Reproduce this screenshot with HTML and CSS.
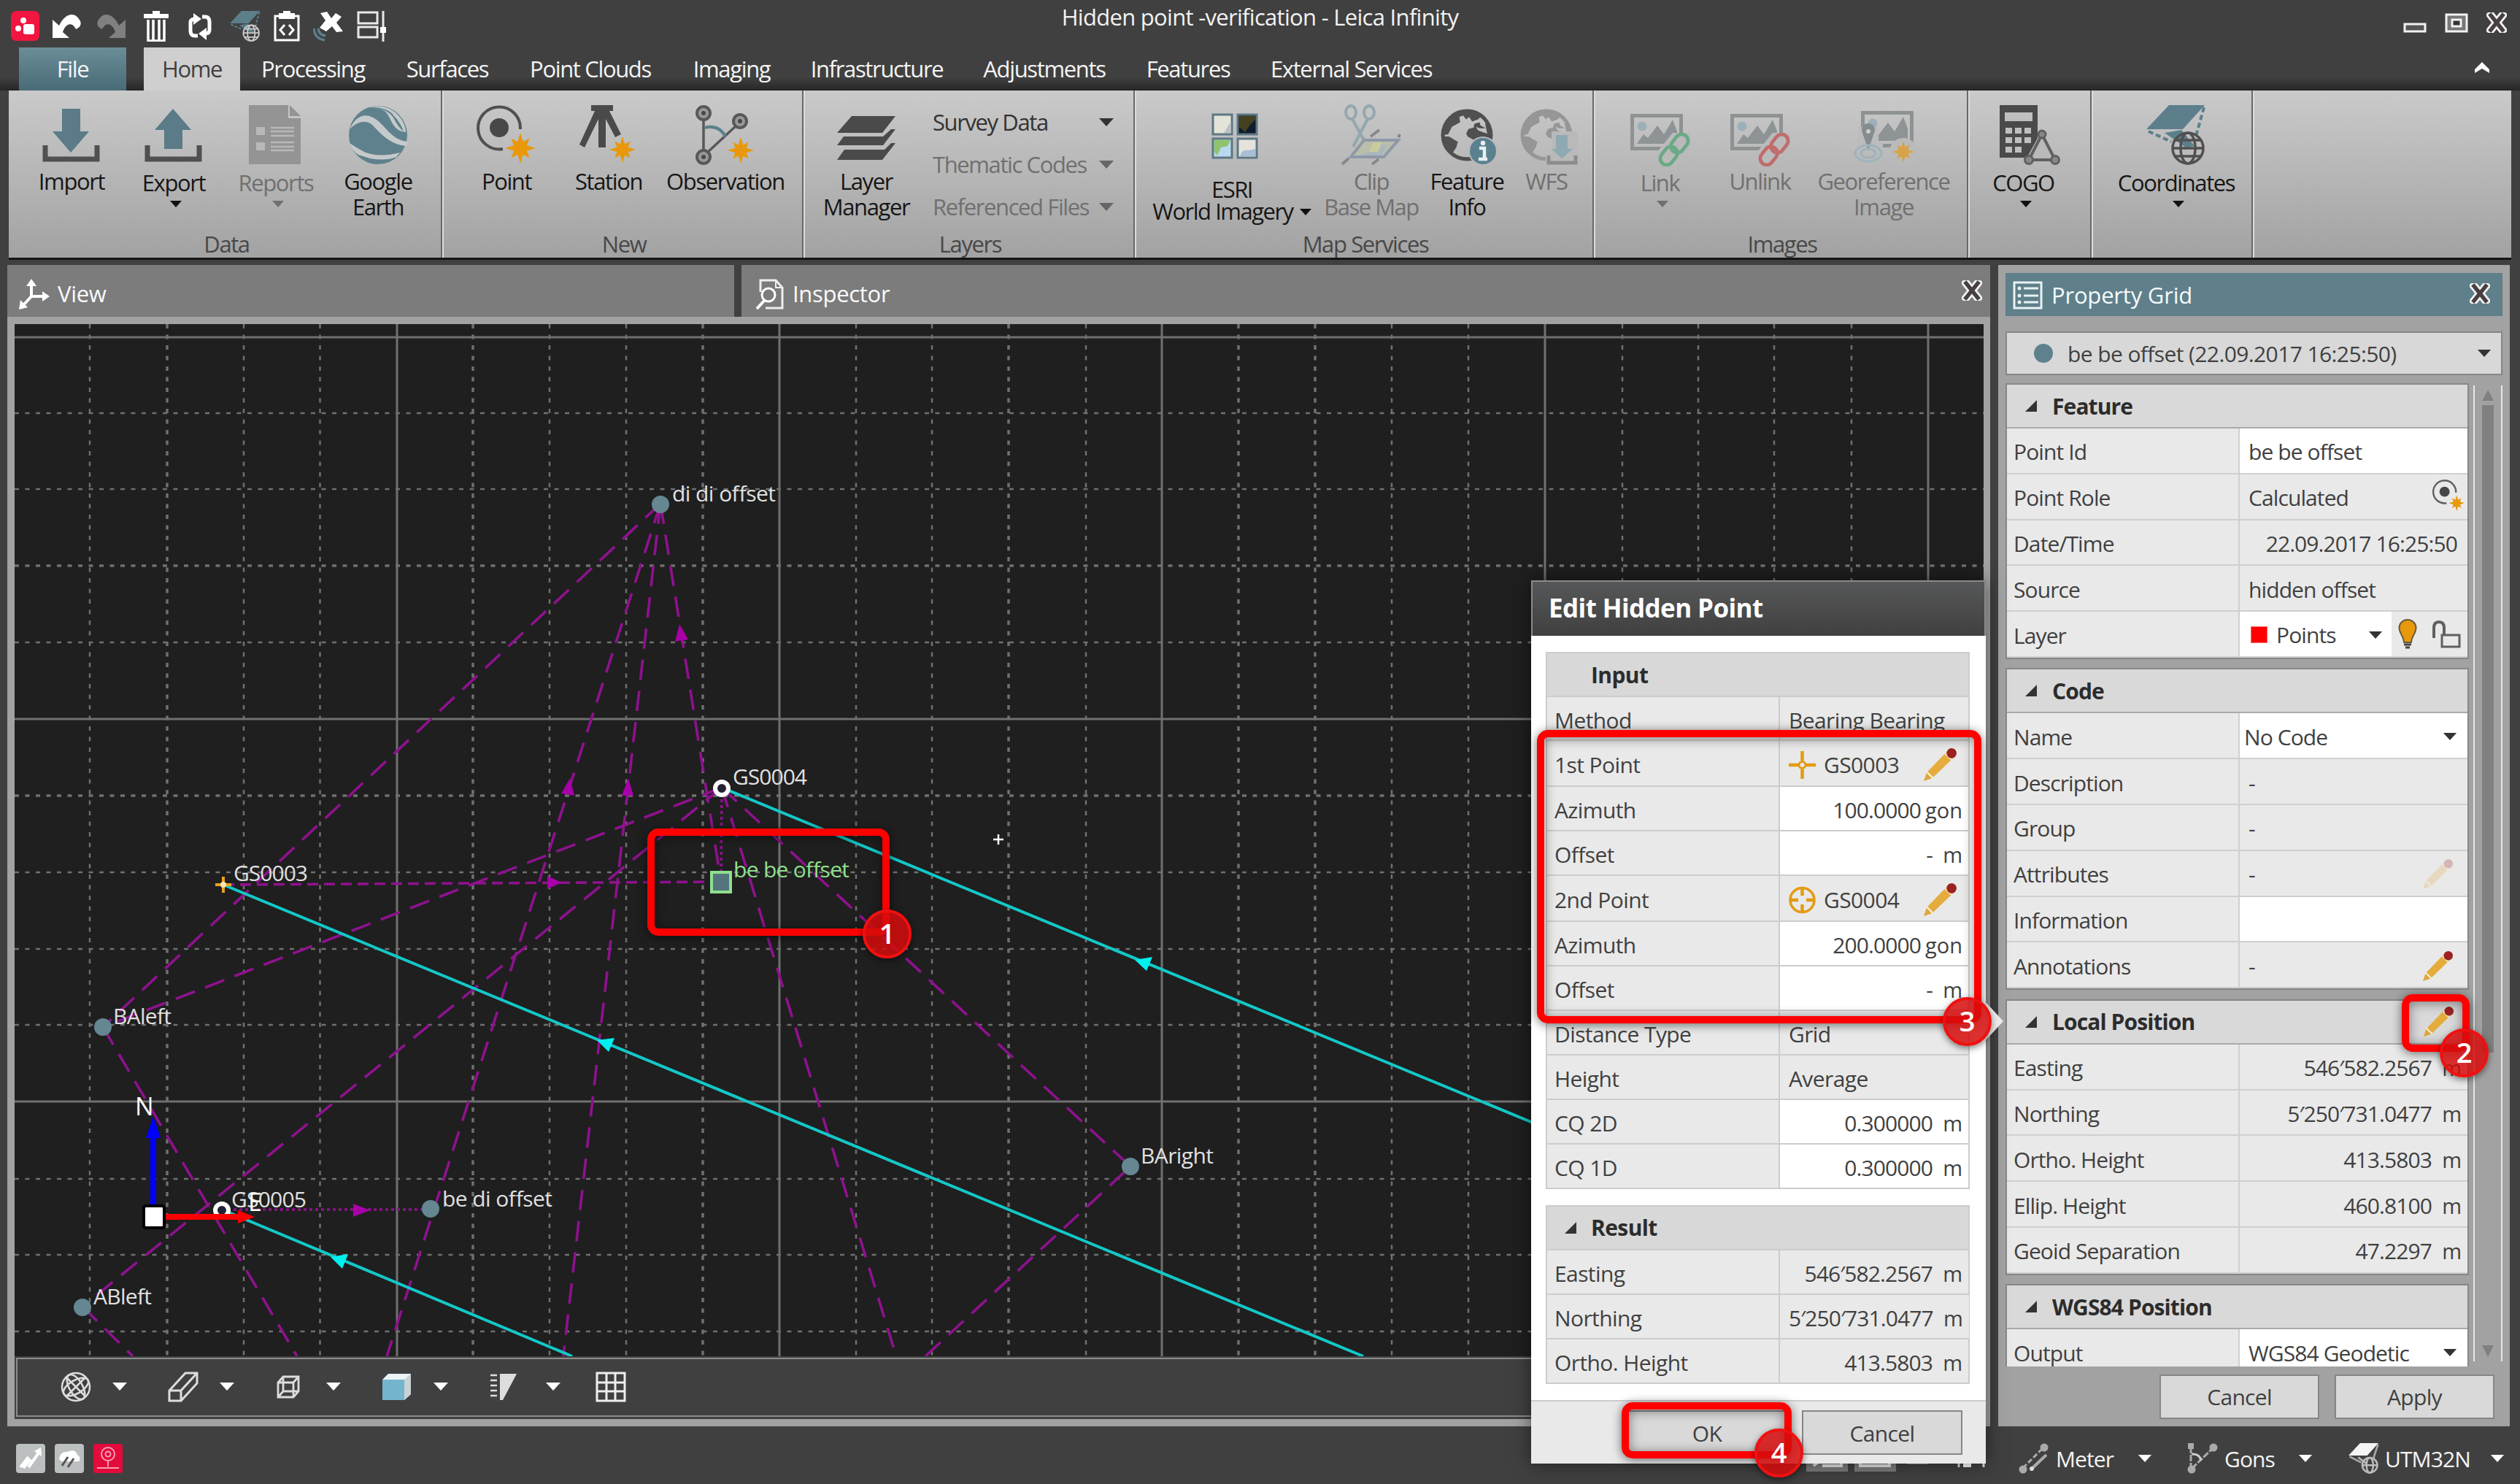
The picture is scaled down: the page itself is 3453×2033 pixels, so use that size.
FILE: index.html
```html
<!DOCTYPE html>
<html lang="en">
<head>
<meta charset="utf-8">
<title>Hidden point -verification - Leica Infinity</title>
<link rel="stylesheet" href="styles.css">
</head>
<body>
<svg class="defs" width="0" height="0">
  <symbol id="down" viewBox="0 0 20 11"><path d="M0 0H20L10 11Z" fill="currentColor"/></symbol>
  <symbol id="fold" viewBox="0 0 16 16"><path d="M16 0V16H0Z" fill="#333"/></symbol>
  <symbol id="burst" viewBox="0 0 50 50"><path fill="#e8980a" d="M25 0L29.5 14.500L40 9L35.500 20.500L50 25L35.500 29.500L40 41L29.500 35.500L25 50L20.500 35.500L10 41L14.500 29.500L0 25L14.500 20.500L10 9L20.500 14.500Z"/></symbol>
  <symbol id="pencil" viewBox="0 0 46 46"><path d="M5 33L33 4L42 13L13 41Z" fill="#e5ac3c"/><path d="M0 46L4 34L12 42Z" fill="#e0a63a"/><path d="M4 33L13 42" stroke="#f8ecd2" stroke-width="2.500"/><path d="M30 7L39 16" stroke="#f3e3c3" stroke-width="3"/><circle cx="39" cy="7" r="7" fill="#9c2222"/></symbol>
  <symbol id="close" viewBox="0 0 28 28"><path d="M6 4L22 24M22 4L6 24" stroke="#f2f2f2" stroke-width="11" stroke-linecap="square"/><path d="M6 4L22 24M22 4L6 24" stroke="#484040" stroke-width="5.500" stroke-linecap="square"/></symbol>
  <symbol id="globe" viewBox="0 0 70 70"><circle cx="35" cy="35" r="32" fill="none" stroke="currentColor" stroke-width="5"/><path fill="currentColor" d="M3 35L6 18L16 6L30 2L50 5L55 9L50 14L42 17L38 11L34 14L30 9L25 11L26 18L15 24L10 34ZM3 37L11 37L23 44L21 51L16 59L7 52ZM45 20L52 18L53 22L60 26L52 26L47 24L50 29L62 33L59 18L66 27L67 37L60 43L56 41L45 42L36 37L34 33L37 27L44 25Z"/></symbol>
  <symbol id="photo" viewBox="0 0 72 50"><rect x="2.500" y="2.500" width="67" height="45" fill="none" stroke="#8e9293" stroke-width="5"/><circle cx="16" cy="17" r="6.500" fill="#9bb0b8"/><path d="M9 41L18 28L24 33L37 16L46 28L58 8L64 24V41Z" fill="#8e9496"/></symbol>
  <symbol id="chain" viewBox="0 0 42 44"><path d="M10 36L34 6" stroke="#bababa" stroke-width="31" stroke-linecap="round"/><g fill="none" stroke="currentColor" stroke-width="4.500"><rect x="-8.500" y="-13" width="17" height="26" rx="8.500" transform="translate(14 30) rotate(38)"/><rect x="-8.500" y="-13" width="17" height="26" rx="8.500" transform="translate(28 14) rotate(38)"/></g></symbol>
  <symbol id="coord" viewBox="0 0 82 82"><path d="M31 0H80L50 33H0Z" fill="#5c7f8b"/><path d="M79 3L67 46M3 36L34 50" stroke="#5c7f8b" stroke-width="4" stroke-dasharray="7 4" fill="none"/><path d="M48 34L66 56L54 58L25 38Z" fill="#5c7f8b"/><g fill="none" stroke="currentColor" stroke-width="3.500"><circle cx="57" cy="59" r="21"/><ellipse cx="57" cy="59" rx="10" ry="21"/><path d="M36 59H78M40 48H74M40 70H74"/></g></symbol>
</svg>

<header class="titlebar">
  <div class="quick">
    <svg width="39" height="41" viewBox="0 0 39 41"><rect width="39" height="41" rx="7" fill="#f0163f"/><circle cx="17" cy="13" r="4" fill="#fff"/><circle cx="10" cy="24" r="4" fill="#fff"/><rect x="17" y="18" width="15" height="14" rx="3" fill="#fff"/></svg>
    <svg width="44" height="34" viewBox="0 0 44 34"><path d="M2 8V33H25L16 25C19 15 28 9 34 21C39 19 42 15 40 10C34-3 20-3 11 16Z" fill="#fff"/></svg>
    <svg width="44" height="34" viewBox="0 0 44 34"><path d="M42 8V33H19L28 25C25 15 16 9 10 21C5 19 2 15 4 10C10-3 24-3 33 16Z" fill="#808080"/></svg>
    <svg class="trash" width="34" height="42" viewBox="0 0 34 42"><path d="M12 0H22V4H34V10H0V4H12Z" fill="#fff"/><path d="M6 12V41H28V12M13 12V40M21 12V40" fill="none" stroke="#fff" stroke-width="3.500"/></svg>
    <svg width="34" height="38" viewBox="0 0 34 38"><path d="M14 32H10Q4 32 4 25V14Q4 9 10 9M20 6H24Q30 6 30 13V24Q30 29 24 29" fill="none" stroke="#fff" stroke-width="5"/><path d="M8 1L19 9L8 17ZM26 21L15 29L26 38Z" fill="#fff"/></svg>
    <svg class="light" width="42" height="42"><use href="#coord"/></svg>
    <svg width="36" height="42" viewBox="0 0 36 42"><rect x="2" y="7" width="32" height="33" fill="none" stroke="#fff" stroke-width="3"/><path d="M7 3H13V0H23V3H29V11H7Z" fill="#fff"/><path d="M15 19L9 26L15 33M21 19L27 26L21 33" fill="none" stroke="#fff" stroke-width="3"/></svg>
    <svg width="42" height="42" viewBox="0 0 42 42"><path d="M10 3L19 1L25 10L31 3L39 8L32 16L41 28L32 29L26 21L18 28L9 23L17 13Z" fill="#fff"/><path d="M1 24Q2 38 16 40M7 24Q8 33 17 34" fill="none" stroke="#5c7f8b" stroke-width="3.500"/></svg>
    <svg width="42" height="42" viewBox="0 0 42 42"><path d="M2 2H28V17H2ZM2 22H28V36H2ZM36 0V22M36 30V42" fill="none" stroke="#e8e8e8" stroke-width="3"/><rect x="32" y="22" width="8" height="8" fill="#fff"/></svg>
  </div>
  <h1 class="apptitle">Hidden point -verification - Leica Infinity</h1>
  <div class="winbtns">
    <svg width="32" height="14" viewBox="0 0 32 14"><rect x="2" y="2" width="28" height="10" fill="#555" stroke="#f2f2f2" stroke-width="3"/></svg>
    <svg width="32" height="27" viewBox="0 0 32 27"><rect x="2" y="2" width="28" height="23" fill="#777" stroke="#f2f2f2" stroke-width="3"/><rect x="10" y="9" width="12" height="9" fill="#333" stroke="#f2f2f2" stroke-width="3"/></svg>
    <svg width="28" height="28"><use href="#close"/></svg>
  </div>
</header>

<nav class="tabs">
  <span class="tab file">File</span>
  <span class="tab active">Home</span>
  <span class="tab w200">Processing</span>
  <span class="tab w168">Surfaces</span>
  <span class="tab w224">Point Clouds</span>
  <span class="tab w163">Imaging</span>
  <span class="tab w235">Infrastructure</span>
  <span class="tab w224">Adjustments</span>
  <span class="tab w170">Features</span>
  <span class="tab w277">External Services</span>
  <svg class="collapse" width="20" height="15" viewBox="0 0 20 15"><path d="M10 0L20 10V15L10 9L0 15V10Z" fill="#fff"/></svg>
</nav>

<section class="ribbon">
  <div class="group g-data">
    <div class="buttons">
      <div class="btn"><svg class="ico" viewBox="0 0 82 82"><path d="M28 5H53V36H65L40 65L15 36H28Z" fill="#5a7b87"/><path d="M5 55V74H76V55" fill="none" stroke="#505050" stroke-width="7"/></svg><span>Import</span></div>
      <div class="btn drop"><svg class="ico" viewBox="0 0 82 82"><path d="M28 60H53V34H65L40 5L15 34H28Z" fill="#5a7b87"/><path d="M5 55V74H76V55" fill="none" stroke="#505050" stroke-width="7"/></svg><span>Export</span><svg class="caret"><use href="#down"/></svg></div>
      <div class="btn drop off"><svg class="ico" viewBox="0 0 82 82"><path d="M4 0H58V18H75V81H4ZM60 0L75 15H60Z" fill="#949494"/><path d="M14 30h12v11h-12zM14 51h12v11h-12z" fill="#b8b8b8"/><path d="M34 31H66M34 36H66M34 42H66M34 51H66M34 57H66M34 62H66" stroke="#b8b8b8" stroke-width="2.500"/></svg><span>Reports</span><svg class="caret"><use href="#down"/></svg></div>
      <div class="btn"><svg class="ico" viewBox="0 0 82 82"><circle cx="41" cy="41" r="40" fill="#5f818d"/><path d="M2 33Q15 6 36 18C52 28 58 47 81 50L80 56C56 54 44 38 32 26Q18 17 2 33ZM27 3Q50 2 56 16C62 28 66 36 79 37Q78 20 62 8Q46-2 27 3ZM2 52Q14 60 24 65Q44 72 71 65L66 71Q52 77 30 73L14 68Q5 62 2 52Z" fill="#c6c9ca"/><path d="M30 2Q56 4 62 14Q72 24 76 36Q68 30 62 17Q54 5 30 2Z" fill="#5f818d"/></svg><span>Google<br>Earth</span></div>
    </div>
    <div class="caption">Data</div>
  </div>
  <div class="group g-new">
    <div class="buttons">
      <div class="btn"><svg class="ico" viewBox="0 0 82 82"><path d="M60 33A29 29 0 1 0 36 60" fill="none" stroke="#505050" stroke-width="4"/><circle cx="31" cy="31" r="13" fill="#484848"/><use href="#burst" x="39" y="38" width="42" height="42"/></svg><span>Point</span></div>
      <div class="btn"><svg class="ico" viewBox="0 0 82 82"><path d="M17 0H47V8H42L58 40L50 44L37 19V58H27V19L8 58L1 54L22 8H17Z" fill="#4a4a4a"/><use href="#burst" x="42" y="43" width="36" height="36"/></svg><span>Station</span></div>
      <div class="btn wide180"><svg class="ico" viewBox="0 0 82 82"><g fill="none" stroke="#585858"><path d="M11 18V64M15 66L56 28" stroke-width="3.500"/><path d="M12 31Q32 26 41 43" stroke="#5c7f8b" stroke-width="4"/><g stroke-width="4" fill="#999"><circle cx="11" cy="11" r="9"/><circle cx="61" cy="22" r="9"/><circle cx="11" cy="71" r="9"/></g></g><g fill="#484848"><circle cx="11" cy="11" r="3"/><circle cx="61" cy="22" r="3"/><circle cx="11" cy="71" r="3"/></g><use href="#burst" x="44" y="44" width="36" height="36"/></svg><span>Observation</span></div>
    </div>
    <div class="caption">New</div>
  </div>
  <div class="group g-layers">
    <div class="layerrow">
      <div class="btn"><svg class="ico" viewBox="0 0 82 82"><path d="M21 15H81L63 38H1ZM1 55L10 43H64L75 33H81L64 55ZM1 75L11 61H66L75 52H81L63 75Z" fill="#4a4a4a"/></svg><span>Layer<br>Manager</span></div>
      <div class="menus">
        <div class="menu">Survey Data<svg class="caret"><use href="#down"/></svg></div>
        <div class="menu off">Thematic Codes<svg class="caret"><use href="#down"/></svg></div>
        <div class="menu off">Referenced Files<svg class="caret"><use href="#down"/></svg></div>
      </div>
    </div>
    <div class="caption">Layers</div>
  </div>
  <div class="group g-map">
    <div class="buttons">
      <div class="btn esri"><svg class="ico" viewBox="0 0 82 82"><g stroke="#5d7883" stroke-width="3"><rect x="11" y="13" width="26" height="27" fill="#e4e3d8"/><rect x="45" y="13" width="26" height="27" fill="#101c2e"/><rect x="11" y="46" width="26" height="26" fill="#b9d9ee"/><rect x="45" y="46" width="26" height="26" fill="#e5e3dc"/></g><path d="M26 38L36 22V38Z" fill="#b9c0c4"/><path d="M47 15H69V20L61 28L55 37L47 30Z" fill="#45401f"/><path d="M13 48H35L31 56L22 58L17 69L13 64Z" fill="#8fc46c"/><path d="M48 70Q50 60 60 62L69 60V70Z" fill="#a9bdd6"/></svg><span>ESRI<br>World Imagery<svg class="caret"><use href="#down"/></svg></span></div>
      <div class="btn off clip"><svg class="ico" viewBox="0 0 82 82"><g fill="none" stroke="#93a7af" stroke-width="4"><ellipse cx="13" cy="10" rx="7" ry="9"/><ellipse cx="38" cy="10" rx="7" ry="9"/><path d="M15 19L32 50M36 19L16 57"/><path d="M52 34L40 43M1 81L10 73M51 74L42 81M80 40L78 44" stroke="#888"/></g><path d="M31 48H78L58 71H13Z" fill="#b9bfab" stroke="#8e98a8" stroke-width="4"/><path d="M50 51L46 60L24 69H55L62 56Z" fill="#a9b6be"/><path d="M44 51H56L50 64H38Z" fill="#c8cc9c"/></svg><span>Clip<br>Base Map</span></div>
      <div class="btn info"><svg class="ico dark" viewBox="0 0 82 82"><use href="#globe" x="4" y="5" width="74" height="72"/><circle cx="63" cy="63" r="20" fill="#bbb"/><circle cx="63" cy="63" r="18" fill="#5c818e"/><path d="M58 59H65V74M57 74H69" stroke="#e8f0f2" stroke-width="4.500" fill="none"/><circle cx="63" cy="52" r="3.200" fill="#e8f0f2"/></svg><span>Feature<br>Info</span></div>
      <div class="btn off wfs"><svg class="ico" viewBox="0 0 82 82"><g color="#969696"><use href="#globe" x="5" y="5" width="72" height="72"/></g><path d="M48 36H84V82H40V66H48Z" fill="#b9b9b9"/><path d="M54 41H70V60H77L62 73L48 60H54Z" fill="#8fa9b2"/><path d="M44 69V79H81V69" fill="none" stroke="#8c8c8c" stroke-width="5"/></svg><span>WFS</span></div>
    </div>
    <div class="caption">Map Services</div>
  </div>
  <div class="group g-images">
    <div class="buttons">
      <div class="btn drop off"><svg class="ico" viewBox="0 0 82 82"><use href="#photo" x="0" y="12" width="72" height="50"/><g color="#6aa986"><use href="#chain" x="38" y="38" width="44" height="46"/></g></svg><span>Link</span><svg class="caret"><use href="#down"/></svg></div>
      <div class="btn off"><svg class="ico" viewBox="0 0 82 82"><use href="#photo" x="0" y="12" width="72" height="50"/><g color="#c06c6c"><use href="#chain" x="38" y="38" width="44" height="46"/></g></svg><span>Unlink</span></div>
      <div class="btn off wide200"><svg class="ico" viewBox="0 0 82 82"><use href="#photo" x="10" y="8" width="72" height="50"/><path d="M6 30H34V50H40V60H6Z" fill="#bcbcbc"/><circle cx="68" cy="64" r="19" fill="#bababa"/><path d="M20 62L12 38A9 9 0 1 1 28 38Z" fill="#858c8e"/><circle cx="20" cy="36" r="3" fill="#ccc"/><g fill="none" stroke="#9db3bb" stroke-width="3"><ellipse cx="20" cy="66" rx="18" ry="11"/><ellipse cx="20" cy="66" rx="10" ry="6"/></g><use href="#burst" x="53" y="49" width="30" height="30" opacity=".65"/></svg><span>Georeference<br>Image</span></div>
    </div>
    <div class="caption">Images</div>
  </div>
  <div class="group g-cogo"><div class="btn drop"><svg class="ico" viewBox="0 0 82 82"><path d="M0 0H52V72H0Z" fill="#4a4a4a"/><path d="M7 10H45V22H7ZM8 31h9v8h-9zM21 31h9v8h-9zM34 31h9v8h-9zM8 44h9v8h-9zM21 44h9v8h-9zM34 44h9v8h-9zM8 57h9v8h-9zM21 57h9v8h-9z" fill="#bfbfbf"/><path d="M58 34L84 82H32Z" fill="#b9b9b9"/><path d="M58 40L40 75H76Z" fill="none" stroke="#606060" stroke-width="4"/><g fill="#888" stroke="#606060" stroke-width="3"><circle cx="58" cy="40" r="5"/><circle cx="40" cy="75" r="5.500"/><circle cx="76" cy="75" r="5.500"/></g></svg><span>COGO</span><svg class="caret"><use href="#down"/></svg></div></div>
  <div class="group g-coord"><div class="btn drop"><svg class="ico dark"><use href="#coord"/></svg><span>Coordinates</span><svg class="caret"><use href="#down"/></svg></div></div>
</section>

<main class="workspace">
  <section class="viewpane">
    <div class="paneltabs">
      <div class="ptab view"><svg width="42" height="42" viewBox="0 0 42 42"><path d="M17 8V24H34M17 24L6 36" fill="none" stroke="#fff" stroke-width="4"/><path d="M17 0L24 10H10ZM42 24L32 31V17ZM0 42L2 29L12 39Z" fill="#fff"/></svg>View</div>
      <div class="ptab inspector"><svg width="40" height="42" viewBox="0 0 40 42"><path d="M7 18V2H28L37 12V40H14" fill="none" stroke="#eee" stroke-width="3"/><path d="M28 2V12H37" fill="none" stroke="#eee" stroke-width="2"/><circle cx="18" cy="22" r="9" fill="none" stroke="#fff" stroke-width="3"/><path d="M12 30L2 41" stroke="#fff" stroke-width="4"/></svg>Inspector<svg class="x" width="28" height="28"><use href="#close"/></svg></div>
    </div>
    <div class="frame">
      <svg class="canvas" viewBox="20 444 2698 1414" width="2698" height="1414">
        <g fill="none" stroke="#707070">
          <path stroke-width="2.500" stroke-dasharray="6 8.500" d="M123 444V1858M334 444V1858M438.500 444V1858M753 444V1858M858 444V1858M1173 444V1858M1277 444V1858M1488 444V1858M1907 444V1858M2012 444V1858M2223 444V1858M2327 444V1858M2431 444V1858M2537 444V1858M20 566H2718M20 670H2718M20 880H2718M20 1195H2718M20 1300H2718M20 1404H2718M20 1615H2718M20 1719H2718M20 1824H2718"/>
          <path stroke-width="3.500" stroke-dasharray="6 8.500" d="M229 444V1858M648 444V1858M963 444V1858M1382 444V1858M1697 444V1858M1802 444V1858M20 775H2718M20 1090H2718"/>
          <path stroke-width="3" d="M544 444V1858M1068 444V1858M1592 444V1858M2117 444V1858M2642 444V1858M20 462H2718M20 985H2718M20 1509H2718"/>
        </g>
        <g fill="none" stroke="#8e128e" stroke-width="3.600">
          <path stroke-dasharray="28 15" d="M905 690L141 1407M905 690L988 1208M905 690L530 1858M905 690L772 1858M989 1079L1228 1858M989 1079L1549 1598L1268 1858M141 1407L407 1858M113 1790L182 1858M989 1079L113 1790M989 1079L141 1407"/>
          <path stroke-dasharray="15 8" d="M306 1212L988 1208"/>
          <path stroke-dasharray="4 4" d="M989 1079L988 1208M304 1657H590"/>
        </g>
        <g fill="#a800a8"><path d="M931 855L943 876L925 879ZM781 1066L787 1090L769 1087ZM861 1066L868 1090H852ZM770 1209L750 1218V1200ZM507 1658L484 1667V1649Z"/></g>
        <g fill="none" stroke="#14c8c8" stroke-width="4"><path d="M306 1212L1868 1858M989 1079L2110 1542M304 1657L784 1858"/></g>
        <g fill="#00f0f0"><path d="M818 1425L842 1422L834 1441ZM1555 1315L1579 1311L1571 1330ZM453 1722L477 1718L469 1738Z"/></g>
        <g fill="#648792"><circle cx="905" cy="691" r="12"/><circle cx="141" cy="1407" r="12"/><circle cx="590" cy="1656" r="12"/><circle cx="113" cy="1791" r="12"/><circle cx="1549" cy="1598" r="12"/></g>
        <g fill="#223" stroke="#fff" stroke-width="6"><circle cx="989" cy="1080" r="9"/><circle cx="304" cy="1658" r="9"/></g>
        <path d="M295 1212H317M306 1201V1223" stroke="#eca21c" stroke-width="4"/><circle cx="306" cy="1212" r="4" fill="#ffe6b0"/>
        <rect x="975" y="1195" width="26" height="27" fill="#55747e" stroke="#8ee08e" stroke-width="4"/>
        <path d="M1361 1150H1375M1368 1143V1157" stroke="#fff" stroke-width="2.500"/>
        <path d="M210 1660V1550" stroke="#00f" stroke-width="8"/><path d="M210 1529L220 1559H200Z" fill="#00f"/>
        <path d="M215 1667H330" stroke="#f00" stroke-width="8"/><path d="M349 1667L326 1658V1676Z" fill="#f00"/>
        <rect x="197" y="1652" width="28" height="30" rx="3" fill="#fff" stroke="#000" stroke-width="4"/>
        <g class="maplabel">
          <text x="921" y="687" textLength="142">di di offset</text>
          <text x="1004" y="1075" textLength="102">GS0004</text>
          <text x="1005" y="1202" textLength="159" class="sel">be be offset</text>
          <text x="320" y="1207" textLength="102">GS0003</text>
          <text x="155" y="1403" textLength="80">BAleft</text>
          <text x="317" y="1654" textLength="103">GS0005</text>
          <text x="606" y="1653" textLength="151">be di offset</text>
          <text x="128" y="1787" textLength="80">ABleft</text>
          <text x="1563" y="1594" textLength="100">BAright</text>
          <text x="340" y="1659" class="axis">E</text>
          <text x="185" y="1528" class="axis">N</text>
        </g>
      </svg>
      <div class="viewbar">
        <svg width="42" height="42" viewBox="0 0 42 42"><g fill="none" stroke="#ddd" stroke-width="2.500"><circle cx="21" cy="21" r="19"/><ellipse cx="21" cy="21" rx="9" ry="19" transform="rotate(-30 21 21)"/><ellipse cx="21" cy="21" rx="19" ry="9" transform="rotate(-30 21 21)"/><path d="M8 8L34 34M34 8L8 34"/></g></svg><svg class="vc"><use href="#down"/></svg>
        <svg width="42" height="42" viewBox="0 0 42 42"><path d="M2 26L24 2H40V16L18 40H2ZM2 26H18V40M18 26L40 2" fill="none" stroke="#ddd" stroke-width="3"/></svg><svg class="vc"><use href="#down"/></svg>
        <svg width="32" height="32" viewBox="0 0 32 32"><path d="M2 10L9 2H30V22L23 30H2ZM2 10H23V30M23 10L30 2M9 2V22H30M9 22L2 30" fill="none" stroke="#ddd" stroke-width="2.800"/></svg><svg class="vc"><use href="#down"/></svg>
        <svg width="42" height="38" viewBox="0 0 42 38"><path d="M2 9L10 1H41V29L32 37H2Z" fill="#eaf4f8"/><path d="M2 9H32V37H2Z" fill="#74b4cc"/><path d="M32 9L41 1V29L32 37Z" fill="#c9d2d6"/></svg><svg class="vc"><use href="#down"/></svg>
        <svg width="38" height="38" viewBox="0 0 38 38"><path d="M14 1H37L18 37H14Z" fill="#ddd"/><path d="M1 3H10M1 10H10M1 17H10M1 24H10M1 31H10" stroke="#ddd" stroke-width="2.500"/></svg><svg class="vc"><use href="#down"/></svg>
        <svg width="42" height="42" viewBox="0 0 42 42"><path d="M2 2H40V40H2ZM15 2V40M27 2V40M2 15H40M2 27H40" fill="none" stroke="#eee" stroke-width="3"/></svg>
      </div>
    </div>
  </section>

  <aside class="props">
    <div class="phead"><svg width="41" height="39" viewBox="0 0 41 39"><rect x="2" y="2" width="37" height="35" fill="none" stroke="#e8f2f4" stroke-width="3"/><path d="M15 10H35M15 20H35M15 29H35" stroke="#e8f2f4" stroke-width="3"/><g fill="#e8f2f4"><circle cx="9" cy="10" r="2.500"/><circle cx="9" cy="20" r="2.500"/><circle cx="9" cy="29" r="2.500"/></g></svg>Property Grid<svg class="x" width="28" height="28"><use href="#close"/></svg></div>
    <div class="picker"><i class="dot"></i><span>be be offset (22.09.2017 16:25:50)</span><svg class="pc"><use href="#down"/></svg></div>
    <div class="scrollarea">
      <div class="sections">
        <div class="sec">
          <div class="sh"><svg width="16" height="16"><use href="#fold"/></svg>Feature</div>
          <div class="row"><b>Point Id</b><div class="w">be be offset</div></div>
          <div class="row"><b>Point Role</b><div>Calculated<svg class="role" viewBox="0 0 82 82"><path d="M60 33A29 29 0 1 0 36 60" fill="none" stroke="#606060" stroke-width="4.500"/><circle cx="31" cy="31" r="13" fill="#484848"/><use href="#burst" x="42" y="40" width="40" height="40"/></svg></div></div>
          <div class="row"><b>Date/Time</b><div class="r date">22.09.2017 16:25:50</div></div>
          <div class="row"><b>Source</b><div>hidden offset</div></div>
          <div class="row"><b>Layer</b><div class="layer"><div class="layersel"><i></i>Points<svg class="pc"><use href="#down"/></svg></div>
            <svg width="26" height="42" viewBox="0 0 26 42"><path d="M8 32C8 24 1.500 20 1.500 12A11.500 11 0 0 1 24.500 12C24.500 20 18 24 18 32Z" fill="#e8980a" stroke="#6a5a3a" stroke-width="2"/><path d="M8 35H18M10 39H16" stroke="#444" stroke-width="3"/></svg>
            <svg width="40" height="38" viewBox="0 0 40 38"><path d="M3 24V10Q3 2 10 2Q17 2 17 10V20" fill="none" stroke="#606060" stroke-width="4"/><rect x="14" y="20" width="24" height="16" fill="none" stroke="#606060" stroke-width="3"/></svg></div></div>
        </div>
        <div class="sec">
          <div class="sh"><svg width="16" height="16"><use href="#fold"/></svg>Code</div>
          <div class="row"><b>Name</b><div class="w tight">No Code<svg class="pc end"><use href="#down"/></svg></div></div>
          <div class="row"><b>Description</b><div>-</div></div>
          <div class="row"><b>Group</b><div>-</div></div>
          <div class="row"><b>Attributes</b><div>-<svg class="pen faded"><use href="#pencil"/></svg></div></div>
          <div class="row"><b>Information</b><div class="w"></div></div>
          <div class="row"><b>Annotations</b><div>-<svg class="pen"><use href="#pencil"/></svg></div></div>
        </div>
        <div class="sec">
          <div class="sh"><svg width="16" height="16"><use href="#fold"/></svg>Local Position<svg class="pen"><use href="#pencil"/></svg></div>
          <div class="row"><b>Easting</b><div class="r">546′582.2567<u>m</u></div></div>
          <div class="row"><b>Northing</b><div class="r">5′250′731.0477<u>m</u></div></div>
          <div class="row"><b>Ortho. Height</b><div class="r">413.5803<u>m</u></div></div>
          <div class="row"><b>Ellip. Height</b><div class="r">460.8100<u>m</u></div></div>
          <div class="row"><b>Geoid Separation</b><div class="r">47.2297<u>m</u></div></div>
        </div>
        <div class="sec">
          <div class="sh"><svg width="16" height="16"><use href="#fold"/></svg>WGS84 Position</div>
          <div class="row"><b>Output</b><div class="w">WGS84 Geodetic<svg class="pc end"><use href="#down"/></svg></div></div>
        </div>
      </div>
      <div class="scrollbar"><svg class="up" width="16" height="15" viewBox="0 0 16 15"><path d="M8 0L16 15H0Z" fill="#808080"/></svg><div class="thumb"></div><svg width="16" height="16" viewBox="0 0 16 16"><path d="M0 0H16L8 16Z" fill="#808080"/></svg></div>
    </div>
    <div class="pbuttons"><span class="pbtn">Cancel</span><span class="pbtn">Apply</span></div>
  </aside>
</main>

<footer class="status">
  <div class="sicons">
    <svg width="40" height="40" viewBox="0 0 40 40"><rect width="40" height="40" rx="4" fill="#bcbfc0"/><path d="M6 32L17 18M17 32L32 11M10 33L20 21" fill="none" stroke="#fff" stroke-width="4"/><path d="M34 5L35 17L25 10Z" fill="#fff"/></svg>
    <svg width="40" height="40" viewBox="0 0 40 40"><rect width="40" height="40" rx="4" fill="#bcbfc0"/><path d="M6 20Q8 10 17 11Q28 6 31 15Q37 19 33 24H12Q7 24 6 20Z" fill="#fff"/><path d="M10 30L18 18M18 32L26 20" stroke="#555" stroke-width="3"/></svg>
    <svg width="40" height="40" viewBox="0 0 40 40"><rect width="40" height="40" rx="4" fill="#e30a3c"/><g fill="none" stroke="#f7a0b2" stroke-width="2"><circle cx="20" cy="14" r="9"/><circle cx="20" cy="14" r="3.500"/><path d="M20 23V31M5 33H35"/></g></svg>
  </div>
  <div class="hiddenicons">
    <svg width="57" height="44" viewBox="0 0 57 44"><rect width="57" height="44" fill="#7c7c7c"/><path d="M10 36L25 24M22 36H48V20" fill="none" stroke="#e8e8e8" stroke-width="4"/></svg>
    <svg width="57" height="44" viewBox="0 0 57 44"><rect width="57" height="44" fill="#7c7c7c"/><path d="M8 10H48V36H8ZM14 27H18M24 27H42" fill="none" stroke="#e8e8e8" stroke-width="4"/></svg>
    <svg width="40" height="36" viewBox="0 0 40 36"><path d="M12 20H38L28 32H2Z" fill="none" stroke="#ccc" stroke-width="3"/></svg>
    <svg width="38" height="42" viewBox="0 0 38 42"><path d="M2 10V38M36 10V38" stroke="#ddd" stroke-width="3"/><path d="M8 20H19V38H8ZM22 10H32V30H22Z" fill="#fff"/></svg>
  </div>
  <div class="units">
    <svg width="42" height="42" viewBox="0 0 42 42"><path d="M6 34L34 6" stroke="#aaa" stroke-width="3" stroke-dasharray="7 3"/><path d="M17 36L38 16" stroke="#aaa" stroke-width="4"/><circle cx="6" cy="36" r="5.500" fill="#aaa"/><circle cx="35" cy="6" r="5.500" fill="#aaa"/><circle cx="18" cy="35" r="3" fill="#ddd"/></svg>
    <span class="u1">Meter</span><svg class="pc"><use href="#down"/></svg>
    <svg class="i2" width="42" height="42" viewBox="0 0 42 42"><path d="M5 5V36L36 6" fill="none" stroke="#aaa" stroke-width="3" stroke-dasharray="9 2"/><path d="M6 15Q17 14 19 24" fill="none" stroke="#ccc" stroke-width="3"/><rect x="1" y="0" width="8" height="8" fill="#aaa"/><circle cx="6" cy="36" r="5.500" fill="#aaa"/><circle cx="36" cy="6" r="5.500" fill="#aaa"/></svg>
    <span class="u2">Gons</span><svg class="pc"><use href="#down"/></svg>
    <svg class="i3" width="42" height="42" viewBox="0 0 82 82"><path d="M31 0H80L50 33H0Z" fill="#f4f4f4"/><path d="M3 36L34 52M79 3L67 40" stroke="#aaa" stroke-width="5"/><g fill="none" stroke="#bbb" stroke-width="5"><circle cx="57" cy="59" r="20"/><ellipse cx="57" cy="59" rx="9" ry="20"/><path d="M37 59H77M26 38L50 56"/></g></svg>
    <span class="u3">UTM32N</span><svg class="pc"><use href="#down"/></svg>
  </div>
</footer>

<div class="dialog">
  <div class="dhead">Edit Hidden Point</div>
  <div class="dbody">
    <div class="dt">
      <div class="dh">Input</div>
      <div class="drow h60"><b>Method</b><div>Bearing Bearing</div></div>
      <div class="drow h63"><b>1st Point</b><div class="pt"><svg width="37" height="38" viewBox="0 0 37 38"><path d="M0 19H13M24 19H37M18.500 0V13M18.500 25V38" stroke="#e39a12" stroke-width="4.500"/><circle cx="18.500" cy="19" r="4.500" fill="none" stroke="#e39a12" stroke-width="3"/></svg>GS0003<svg class="pen"><use href="#pencil"/></svg></div></div>
      <div class="drow"><b>Azimuth</b><div class="w r">100.0000<u class="gon">gon</u></div></div>
      <div class="drow"><b>Offset</b><div class="w r">-<u>m</u></div></div>
      <div class="drow h63"><b>2nd Point</b><div class="pt"><svg width="37" height="38" viewBox="0 0 37 38"><path d="M1 19H13M24 19H36M18.500 1V13M18.500 25V37" stroke="#e39a12" stroke-width="4.500"/><circle cx="18.500" cy="19" r="16.500" fill="none" stroke="#e39a12" stroke-width="3.500"/></svg>GS0004<svg class="pen"><use href="#pencil"/></svg></div></div>
      <div class="drow"><b>Azimuth</b><div class="w r">200.0000<u class="gon">gon</u></div></div>
      <div class="drow"><b>Offset</b><div class="w r">-<u>m</u></div></div>
      <div class="drow"><b>Distance Type</b><div>Grid</div></div>
      <div class="drow"><b>Height</b><div>Average</div></div>
      <div class="drow"><b>CQ 2D</b><div class="w r">0.300000<u>m</u></div></div>
      <div class="drow"><b>CQ 1D</b><div class="w r">0.300000<u>m</u></div></div>
    </div>
    <div class="dt">
      <div class="dh fold"><svg width="16" height="16"><use href="#fold"/></svg>Result</div>
      <div class="drow"><b>Easting</b><div class="r">546′582.2567<u>m</u></div></div>
      <div class="drow"><b>Northing</b><div class="r">5′250′731.0477<u>m</u></div></div>
      <div class="drow"><b>Ortho. Height</b><div class="r">413.5803<u>m</u></div></div>
    </div>
  </div>
  <div class="dfoot"><span class="dbtn">OK</span><span class="dbtn">Cancel</span></div>
  <svg class="pointer" width="25" height="54" viewBox="0 0 25 54"><path d="M0 0L25 27L0 54Z" fill="#ebebeb"/></svg>
</div>

<div class="mark m1"></div><div class="mark m2"></div><div class="mark m3"></div><div class="mark m4"></div>
<div class="badge b1">1</div><div class="badge b2">2</div><div class="badge b3">3</div><div class="badge b4">4</div>
</body>
</html>
```
FILE: styles.css
```css
* { box-sizing: border-box; }
body {
  margin: 0; width: 3453px; height: 2033px; overflow: hidden; position: relative;
  display: flex; flex-direction: column;
  background: #404040; color: #404040;
  font-family: "Open Sans", "Noto Sans", sans-serif;
  font-size: 30px; letter-spacing: -0.9px; line-height: 35px; white-space: nowrap;
}
svg { display: block; flex: none; }
.defs { position: absolute; }
b { font-weight: 400; }
u { text-decoration: none; }

/* title bar */
.titlebar { height: 65px; display: grid; grid-template-columns: 1fr 600px 1fr; flex: none; color: #f2f2f2; }
.quick { display: flex; align-items: center; gap: 18px; padding: 6px 0 0 15px; }
.quick svg:nth-child(2), .quick svg:nth-child(3) { margin-left: -2px; }
.quick .trash { margin-left: 5px; }
.quick .light { color: #ccc; margin: 0 0 0 6px; }
.quick svg:nth-child(5) { margin-left: 8px; }
.apptitle { margin: 0; font-size: 31px; font-weight: 400; text-align: center; padding-top: 6px; letter-spacing: -0.7px; }
.winbtns { display: flex; justify-content: flex-end; align-items: flex-end; gap: 25px; padding: 0 18px 20px 0; }

/* tabs */
.tabs { height: 59px; flex: none; display: flex; padding-left: 26px; background: linear-gradient(#404040 70%, #262626); color: #f4f4f4; font-size: 31px; letter-spacing: -1.35px; }
.tab { text-align: center; line-height: 59px; }
.file { width: 147px; margin-right: 24px; background: linear-gradient(#6b8d98, #496b77); }
.active { width: 132px; background: #cfcfcf; color: #404040; }
.w200 { width: 200px; } .w168 { width: 168px; } .w224 { width: 224px; } .w163 { width: 163px; }
.w235 { width: 235px; } .w170 { width: 170px; } .w277 { width: 277px; }
.collapse { margin: 20px 42px 0 auto; }

/* ribbon */
.ribbon { height: 232px; flex: none; margin: 0 12px; display: flex; background: linear-gradient(#cacaca, #a2a2a2); border-bottom: 3px solid #141414; color: #161616; font-size: 31px; letter-spacing: -1.4px; }
.group { border-right: 2px solid #686868; box-shadow: 2px 0 0 #dcdcdc; display: flex; flex-direction: column; justify-content: space-between; }
.g-data { width: 594px; } .g-new { width: 495px; } .g-layers { width: 454px; } .g-map { width: 629px; }
.g-images { width: 513px; } .g-cogo { width: 169px; } .g-coord { width: 221px; }
.buttons { display: flex; padding-left: 16px; }
.btn { width: 140px; flex: none; padding-top: 20px; display: flex; flex-direction: column; align-items: center; text-align: center; }
.ico { width: 82px; height: 82px; overflow: visible; margin-bottom: 5px; }
.dark { color: #505050; }
.drop span { padding-top: 2px; }
.caret { width: 16px; height: 11px; color: #111; }
.btn .caret { margin: 6px 0 0 6px; }
.off { color: #707070; }
.off .caret { color: #707070; }
.caption { text-align: center; color: #484848; padding: 0 0 1px 5px; }
.wide180 { width: 180px; } .wide200 { width: 200px; }
.g-new .buttons { padding-left: 18px; }
.layerrow { display: flex; padding-left: 16px; }
.menus { display: flex; flex-direction: column; padding: 26px 0 0 21px; width: 269px; gap: 23px; color: #333; }
.menus .menu { display: flex; justify-content: space-between; align-items: center; height: 35px; }
.menus .off { color: #707070; }
.menus .caret { width: 20px; color: #333; }
.menus .off .caret { color: #666; }
.g-map .buttons { padding-left: 10px; }
.esri { width: 252px; }
.esri .ico { transform: translateX(1px); margin-bottom: 18px; }
.esri span { line-height: 30px; transform: translateX(-3px); }
.esri .caret { display: inline-block; width: 16px; margin: 0 0 5px 9px; }
.clip { width: 124px; } .info { width: 138px; } .wfs { width: 80px; }
.clip, .esri { letter-spacing: -1.5px; }
.g-images .buttons { padding-left: 22px; }
.g-images .btn { width: 137px; }
.g-images .btn.wide200 { width: 202px; }
.g-cogo .btn { width: 151px; }
.g-cogo .ico { transform: translateX(8px); }
.g-coord .btn { width: 232px; }

/* work area */
.workspace { display: flex; flex: none; height: 1591px; margin: 7px 14px 0 10px; justify-content: space-between; }
.viewpane { width: 2717px; display: flex; flex-direction: column; }
.paneltabs { display: flex; gap: 10px; height: 71px; flex: none; }
.ptab { background: #7c7c7c; color: #fafafa; display: flex; align-items: center; gap: 11px; padding: 8px 0 0 16px; font-size: 31px; letter-spacing: -0.3px; }
.view { width: 996px; }
.inspector { flex: 1; padding-left: 19px; }
.ptab .x { margin: -10px 11px 0 auto; }
.frame { flex: 1; background: #404040; border: 10px solid #a2a2a2; border-right-width: 9px; display: flex; flex-direction: column; }
.canvas { background: #1f1f1f; }
.viewbar { margin: 2px 2px; height: 81px; border: 2px solid #8c8c8c; display: flex; align-items: center; padding: 0 0 2px 59px; }
.viewbar .vc { width: 20px; height: 11px; color: #fff; margin: 0 56px 0 29px; }
.viewbar .vc:nth-of-type(4) { margin: 0 58px 0 29px; }
.viewbar .vc:nth-of-type(6) { margin: 0 55px 0 36px; }
.viewbar .vc:nth-of-type(8) { margin: 0 57px 0 30px; }
.viewbar .vc:nth-of-type(10) { margin: 0 48px 0 39px; }
.maplabel { font-size: 30px; fill: #e0e0e0; letter-spacing: 0; }
.maplabel .sel { fill: #8ee08e; }
.maplabel .axis { font-size: 34px; fill: #fff; }

/* property grid */
.props { width: 701px; background: #a2a2a2; padding: 11px 10px 0; display: flex; flex-direction: column; }
.phead { height: 59px; flex: none; background: #5f7f8a; color: #f4fafb; display: flex; align-items: center; gap: 12px; padding: 2px 0 0 10px; font-size: 31px; letter-spacing: -0.2px; }
.phead .x { margin: -6px 17px 0 auto; }
.picker { height: 60px; flex: none; margin-top: 21px; background: #d8d8d8; border: 2px solid #868686; display: flex; align-items: center; padding: 0 13px 0 37px; letter-spacing: -0.6px; }
.dot { width: 26px; height: 26px; border-radius: 50%; background: #5f818d; margin-right: 20px; }
.pc { width: 20px; height: 10px; color: #333; margin-left: auto; }
.scrollarea { margin-top: 11px; height: 1347px; overflow: hidden; display: flex; justify-content: space-between; flex: none; }
.sections { width: 635px; display: flex; flex-direction: column; gap: 12.5px; }
.sec { border: 2px solid #868686; background: #cfcfcf; flex: none; }
.sh { height: 60px; background: #d9d9d9; border-bottom: 2px solid #aaa; font-weight: 700; color: #2c2c2c; display: flex; align-items: center; padding: 0 17px 0 25px; gap: 21px; letter-spacing: -0.9px; }
.row { height: 62.8px; display: grid; grid-template-columns: 317px 1fr; gap: 2px; padding-bottom: 2px; }
.row > b { background: #e9e9e9; padding: 3px 0 0 9px; display: flex; align-items: center; }
.row > div { background: #e9e9e9; padding: 3px 8px 0 12px; display: flex; align-items: center; }
.row > div.w, .drow > div.w { background: #fff; }
.row > .tight { padding-left: 6px; }
.row > .r, .drow > .r { justify-content: flex-end; }
.row > .date { padding-right: 14px; letter-spacing: -0.95px; }
.row .r, .drow .r { letter-spacing: -0.9px; }
.r u { width: 41px; text-align: right; letter-spacing: 0; font-size: 29px; }
.r .gon { width: 60px; letter-spacing: 0; }
.drow .r .gon { width: 57px; }
.end { margin-right: 6px; }
.role { width: 44px; height: 46px; margin: -6px -4px 0 auto; }
.pen { width: 41px; height: 41px; margin-left: auto; margin-right: 12px; }
.sh .pen { margin-right: 2px; }
.faded { opacity: .25; }
.row > .layer { padding: 0; }
.layer > svg:nth-child(2) { margin: 0 20px 0 9px; }
.layersel { width: 208px; height: 100%; background: #fff; display: flex; align-items: center; padding: 2px 12px 0 15px; }
.layersel i { width: 23px; height: 23px; background: #f00; margin-right: 12px; border: 1px solid #f66; }
.scrollbar { width: 40px; margin: 3px 0 7px; border-left: 2px solid #e8e8e8; border-right: 2px solid #e8e8e8; display: flex; flex-direction: column; align-items: center; padding: 6px 0; }
.thumb { width: 16px; height: 887px; background: #808080; margin: 6px 0 auto; }
.pbuttons { display: flex; justify-content: flex-end; gap: 21px; padding: 11px 11px 0 0; }
.pbtn { width: 219px; height: 61px; line-height: 57px; background: #d9d9d9; border: 2px solid #868686; text-align: center; letter-spacing: -0.7px; }

/* status bar */
.status { flex: 1; display: flex; align-items: center; padding-left: 22px; color: #f4f4f4; }
.sicons { display: flex; gap: 13px; width: 2453px; margin-top: 9px; }
.hiddenicons { display: flex; gap: 9px; width: 291px; align-items: flex-start; }
.hiddenicons svg:nth-child(3) { margin-left: 6px; }
.hiddenicons svg:nth-child(4) { margin-left: 20px; }
.units { display: flex; align-items: center; margin-top: 9px; }
.units .pc { color: #fff; margin: 0; }
.u1 { width: 121px; padding-left: 9px; } .u2 { width: 110px; padding-left: 9px; } .u3 { width: 152px; padding-left: 8px; }
.i2 { margin-left: 48px; } .i3 { margin-left: 49px; }

/* dialog */
.dialog { position: absolute; left: 2098px; top: 795px; width: 623px; height: 1210px; background: #fff; box-shadow: 0 0 24px rgba(0,0,0,.5); display: flex; flex-direction: column; letter-spacing: -0.6px; }
.dhead { height: 76px; flex: none; border: 2px solid #8a8a8a; border-bottom: 0; background: linear-gradient(#565758, #404040); color: #fff; font-weight: 700; font-size: 35px; line-height: 72px; padding-left: 22px; letter-spacing: -0.6px; }
.dbody { padding: 22px 22px 0 20px; display: flex; flex-direction: column; gap: 22px; }
.dt { border: 2px solid #ccc; border-bottom: 0; background: #ccc; }
.dh { height: 60px; background: #d8d8d8; border-bottom: 2px solid #ccc; font-weight: 700; color: #2c2c2c; line-height: 60px; padding-left: 60px; }
.dh.fold { display: flex; align-items: center; padding-left: 24px; gap: 20px; }
.drow { height: 61px; display: grid; grid-template-columns: 317px 1fr; gap: 2px; padding-bottom: 2px; }
.h60 { height: 60px; } .h63 { height: 63px; }
.drow > b, .drow > div { background: #e9e9e9; padding: 4px 8px 0 10px; display: flex; align-items: center; }
.drow > div { padding-left: 12px; }
.drow > .pt { gap: 11px; padding-right: 4px; }
.pt .pen { width: 45px; height: 45px; }
.dfoot { margin-top: auto; height: 87px; background: #e9e9e9; border-top: 2px solid #ccc; display: flex; justify-content: flex-end; gap: 20px; padding: 12px 32px 0 0; }
.dbtn { width: 220px; height: 61px; line-height: 59px; border: 2px solid #868686; background: #d9d9d9; text-align: center; }
.pointer { position: absolute; left: 622px; top: 577px; }

/* callouts */
.mark { position: absolute; border: 10px solid #f00; border-radius: 15px; box-shadow: 0 2px 14px rgba(0,0,0,.55), inset 0 2px 16px rgba(0,0,0,.45); }
.m1 { left: 887px; top: 1135px; width: 332px; height: 147px; }
.m2 { left: 3291px; top: 1362px; width: 93px; height: 79px; }
.m3 { left: 2106px; top: 1000px; width: 609px; height: 402px; }
.m4 { left: 2222px; top: 1921px; width: 233px; height: 77px; }
.badge { position: absolute; width: 67px; height: 67px; border-radius: 50%; border: 4px solid #f01010; background: rgba(214,12,12,.85); box-shadow: 0 3px 10px rgba(0,0,0,.5); color: #fff; font-size: 38px; font-weight: 600; line-height: 57px; text-align: center; letter-spacing: 0; }
.b1 { left: 1182px; top: 1246px; }
.b2 { left: 3343px; top: 1409px; }
.b3 { left: 2662px; top: 1366px; }
.b4 { left: 2404px; top: 1957px; }
```
